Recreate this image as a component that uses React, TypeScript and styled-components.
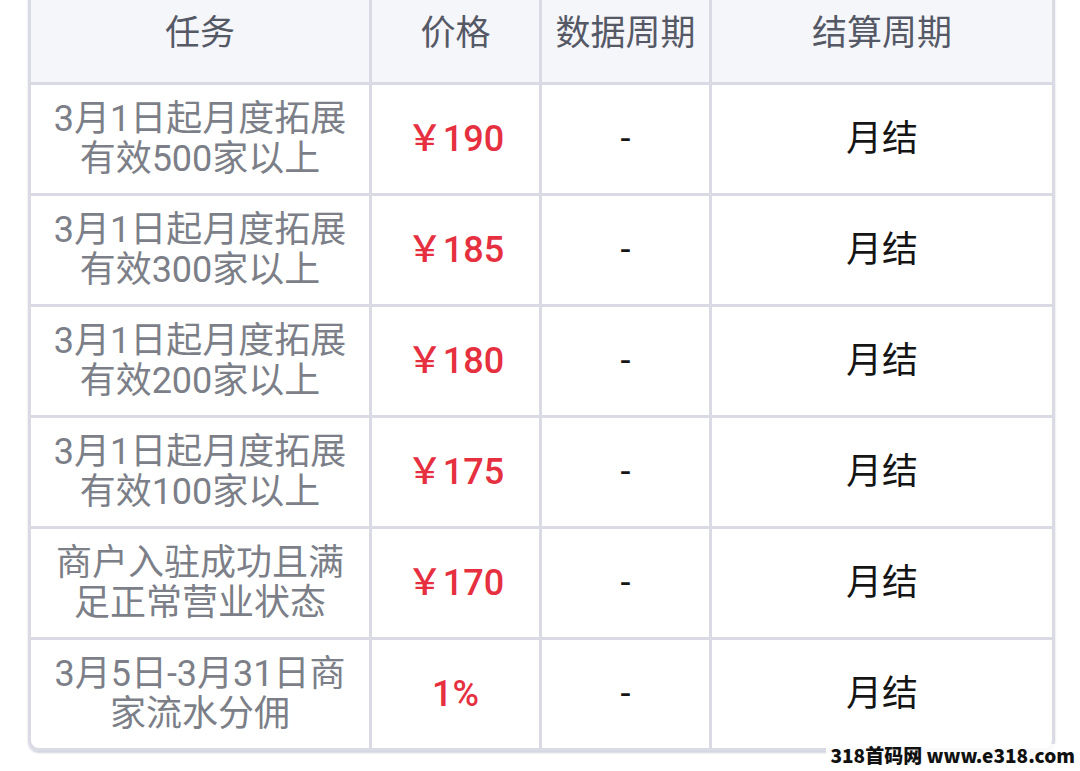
import { Fragment } from 'react';
import styled, { createGlobalStyle } from 'styled-components';

const GlobalStyle = createGlobalStyle`
  html, body {
    margin: 0;
    padding: 0;
    background: #ffffff;
    overflow: hidden;
  }
  body {
    font-family: Roboto, "Noto Sans CJK SC", sans-serif;
  }
`;

const Page = styled.div`
  position: relative;
  width: 1080px;
  height: 771px;
  overflow: hidden;
  background: #ffffff;
`;

const TableCard = styled.div`
  margin: -19px 0 0 28px;
  width: 1027px;
  border: 3px solid #d9dae4;
  border-radius: 0 0 11px 11px;
  overflow: hidden;
  box-sizing: border-box;
  box-shadow: 0 2px 2px rgba(205, 207, 220, 0.9);
`;

const Grid = styled.div`
  display: grid;
  grid-template-columns: 338px 167px 167px 340px;
  grid-template-rows: 98px;
  grid-auto-rows: 108px;
  gap: 3px;
  background: #d9dae4;
`;

const HeadCell = styled.div`
  display: flex;
  align-items: center;
  justify-content: center;
  padding-top: 2px;
  background: #f5f6fa;
  color: #555966;
  font-size: 35px;
  line-height: 40px;
`;

const Cell = styled.div<{ $tone?: 'task' | 'price' | 'plain' }>`
  display: flex;
  align-items: center;
  justify-content: center;
  text-align: center;
  white-space: pre-line;
  background: #ffffff;
  font-size: 36px;
  line-height: 40px;
  font-weight: ${(p) => (p.$tone === 'price' ? 500 : 400)};
  color: ${(p) =>
    p.$tone === 'task' ? '#7c7f88' : p.$tone === 'price' ? '#e6303f' : '#151515'};
`;

const Watermark = styled.div`
  position: absolute;
  right: 5px;
  bottom: 5px;
  font-family: "Noto Sans CJK SC", sans-serif;
  font-weight: 900;
  font-size: 19px;
  line-height: 22px;
  color: #111111;
  background: rgba(255, 255, 255, 0.85);
  padding-left: 4px;
`;

const headers = ['任务', '价格', '数据周期', '结算周期'];

const rows = [
  { task: '3月1日起月度拓展\n有效500家以上', price: '￥190' },
  { task: '3月1日起月度拓展\n有效300家以上', price: '￥185' },
  { task: '3月1日起月度拓展\n有效200家以上', price: '￥180' },
  { task: '3月1日起月度拓展\n有效100家以上', price: '￥175' },
  { task: '商户入驻成功且满\n足正常营业状态', price: '￥170' },
  { task: '3月5日-3月31日商\n家流水分佣', price: '1%' },
];

const App = () => {
  return (
    <Page>
      <GlobalStyle />
      <TableCard>
        <Grid>
          {headers.map((h) => (
            <HeadCell key={h}>{h}</HeadCell>
          ))}
          {rows.map((r, i) => (
            <Fragment key={i}>
              <Cell $tone="task">{r.task}</Cell>
              <Cell $tone="price">{r.price}</Cell>
              <Cell>-</Cell>
              <Cell>月结</Cell>
            </Fragment>
          ))}
        </Grid>
      </TableCard>
      <Watermark>318首码网 www.e318.com</Watermark>
    </Page>
  );
};

export default App;
